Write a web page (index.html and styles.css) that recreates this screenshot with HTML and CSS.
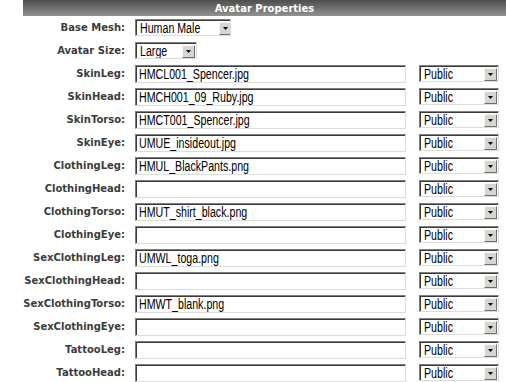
FILE: index.html
```html
<!DOCTYPE html>
<html>
<head>
<meta charset="utf-8">
<link rel="stylesheet" href="styles.css">
</head>
<body>
<div class="panel">
  <div class="title">Avatar Properties</div>
  <div class="form">
    <div class="label">Base Mesh:</div>
    <div class="cell"><span class="sel w-mesh"><span class="val">Human Male</span><span class="btn"><svg width="5" height="3" viewBox="0 0 5 3"><path d="M0 0H5L2.5 3Z" fill="#000"/></svg></span></span></div>
    <div></div>

    <div class="label">Avatar Size:</div>
    <div class="cell"><span class="sel w-size"><span class="val">Large</span><span class="btn"><svg width="5" height="3" viewBox="0 0 5 3"><path d="M0 0H5L2.5 3Z" fill="#000"/></svg></span></span></div>
    <div></div>

    <div class="label">SkinLeg:</div>
    <div class="cell"><span class="txt"><span class="val">HMCL001_Spencer.jpg</span></span></div>
    <div class="cell"><span class="sel w-pub"><span class="val">Public</span><span class="btn"><svg width="5" height="3" viewBox="0 0 5 3"><path d="M0 0H5L2.5 3Z" fill="#000"/></svg></span></span></div>

    <div class="label">SkinHead:</div>
    <div class="cell"><span class="txt"><span class="val">HMCH001_09_Ruby.jpg</span></span></div>
    <div class="cell"><span class="sel w-pub"><span class="val">Public</span><span class="btn"><svg width="5" height="3" viewBox="0 0 5 3"><path d="M0 0H5L2.5 3Z" fill="#000"/></svg></span></span></div>

    <div class="label">SkinTorso:</div>
    <div class="cell"><span class="txt"><span class="val">HMCT001_Spencer.jpg</span></span></div>
    <div class="cell"><span class="sel w-pub"><span class="val">Public</span><span class="btn"><svg width="5" height="3" viewBox="0 0 5 3"><path d="M0 0H5L2.5 3Z" fill="#000"/></svg></span></span></div>

    <div class="label">SkinEye:</div>
    <div class="cell"><span class="txt"><span class="val">UMUE_insideout.jpg</span></span></div>
    <div class="cell"><span class="sel w-pub"><span class="val">Public</span><span class="btn"><svg width="5" height="3" viewBox="0 0 5 3"><path d="M0 0H5L2.5 3Z" fill="#000"/></svg></span></span></div>

    <div class="label">ClothingLeg:</div>
    <div class="cell"><span class="txt"><span class="val">HMUL_BlackPants.png</span></span></div>
    <div class="cell"><span class="sel w-pub"><span class="val">Public</span><span class="btn"><svg width="5" height="3" viewBox="0 0 5 3"><path d="M0 0H5L2.5 3Z" fill="#000"/></svg></span></span></div>

    <div class="label">ClothingHead:</div>
    <div class="cell"><span class="txt"></span></div>
    <div class="cell"><span class="sel w-pub"><span class="val">Public</span><span class="btn"><svg width="5" height="3" viewBox="0 0 5 3"><path d="M0 0H5L2.5 3Z" fill="#000"/></svg></span></span></div>

    <div class="label">ClothingTorso:</div>
    <div class="cell"><span class="txt"><span class="val">HMUT_shirt_black.png</span></span></div>
    <div class="cell"><span class="sel w-pub"><span class="val">Public</span><span class="btn"><svg width="5" height="3" viewBox="0 0 5 3"><path d="M0 0H5L2.5 3Z" fill="#000"/></svg></span></span></div>

    <div class="label">ClothingEye:</div>
    <div class="cell"><span class="txt"></span></div>
    <div class="cell"><span class="sel w-pub"><span class="val">Public</span><span class="btn"><svg width="5" height="3" viewBox="0 0 5 3"><path d="M0 0H5L2.5 3Z" fill="#000"/></svg></span></span></div>

    <div class="label">SexClothingLeg:</div>
    <div class="cell"><span class="txt"><span class="val">UMWL_toga.png</span></span></div>
    <div class="cell"><span class="sel w-pub"><span class="val">Public</span><span class="btn"><svg width="5" height="3" viewBox="0 0 5 3"><path d="M0 0H5L2.5 3Z" fill="#000"/></svg></span></span></div>

    <div class="label">SexClothingHead:</div>
    <div class="cell"><span class="txt"></span></div>
    <div class="cell"><span class="sel w-pub"><span class="val">Public</span><span class="btn"><svg width="5" height="3" viewBox="0 0 5 3"><path d="M0 0H5L2.5 3Z" fill="#000"/></svg></span></span></div>

    <div class="label">SexClothingTorso:</div>
    <div class="cell"><span class="txt"><span class="val">HMWT_blank.png</span></span></div>
    <div class="cell"><span class="sel w-pub"><span class="val">Public</span><span class="btn"><svg width="5" height="3" viewBox="0 0 5 3"><path d="M0 0H5L2.5 3Z" fill="#000"/></svg></span></span></div>

    <div class="label">SexClothingEye:</div>
    <div class="cell"><span class="txt"></span></div>
    <div class="cell"><span class="sel w-pub"><span class="val">Public</span><span class="btn"><svg width="5" height="3" viewBox="0 0 5 3"><path d="M0 0H5L2.5 3Z" fill="#000"/></svg></span></span></div>

    <div class="label">TattooLeg:</div>
    <div class="cell"><span class="txt"></span></div>
    <div class="cell"><span class="sel w-pub"><span class="val">Public</span><span class="btn"><svg width="5" height="3" viewBox="0 0 5 3"><path d="M0 0H5L2.5 3Z" fill="#000"/></svg></span></span></div>

    <div class="label">TattooHead:</div>
    <div class="cell"><span class="txt"></span></div>
    <div class="cell"><span class="sel w-pub"><span class="val">Public</span><span class="btn"><svg width="5" height="3" viewBox="0 0 5 3"><path d="M0 0H5L2.5 3Z" fill="#000"/></svg></span></span></div>
  </div>
</div>
</body>
</html>
```
FILE: styles.css
```css
html, body {
  margin: 0;
  padding: 0;
  background: #ffffff;
}
.panel {
  margin-left: 23px;
  width: 483px;
}
.title {
  height: 16px;
  box-sizing: border-box;
  padding-top: 3px;
  background: linear-gradient(#4e4e4e, #6e6e6e 50%, #929292);
  color: #ffffff;
  font: bold 10px "DejaVu Sans", sans-serif;
  line-height: 12px;
  text-align: center;
}
.form {
  display: grid;
  grid-template-columns: 102px 271px 81px;
  grid-auto-rows: 23px;
  column-gap: 11px;
  align-items: center;
}
.form > div:nth-child(3n+2) { margin-left: -1px; }
.form > div:nth-child(3n) { margin-left: 1px; }
.label {
  text-align: right;
  font: bold 10px "DejaVu Sans", sans-serif;
  color: #3c3c3c;
  white-space: nowrap;
}
.cell {
  display: flex;
  align-items: center;
}
.txt, .sel {
  box-sizing: border-box;
  display: flex;
  align-items: center;
  font: 14px "Liberation Sans", Arial, sans-serif;
  color: #000;
  background: #fff;
  border-style: solid;
  border-width: 1px;
  border-color: #7f7f7f #dcdcdc #dcdcdc #7f7f7f;
  box-shadow: inset 1px 1px 0 #3a3a3a;
  white-space: nowrap;
  overflow: hidden;
}
.val {
  display: inline-block;
  transform: scaleX(0.76);
  transform-origin: left center;
  line-height: 16px;
}
.txt {
  width: 271px;
  height: 18px;
  padding-left: 3px;
}
.sel {
  height: 17px;
  padding-left: 4px;
  padding-right: 1px;
  justify-content: space-between;
}
.btn {
  flex: none;
  width: 13px;
  height: 13px;
  margin-top: 1px;
  box-sizing: border-box;
  display: flex;
  align-items: center;
  justify-content: center;
  background: #d8d5d0;
  border: 1px solid;
  border-color: #f6f6f6 #707070 #707070 #f6f6f6;
}
.btn svg { display: block; }
.w-mesh { width: 96px; }
.w-size { width: 62px; }
.w-pub { width: 81px; }
```
